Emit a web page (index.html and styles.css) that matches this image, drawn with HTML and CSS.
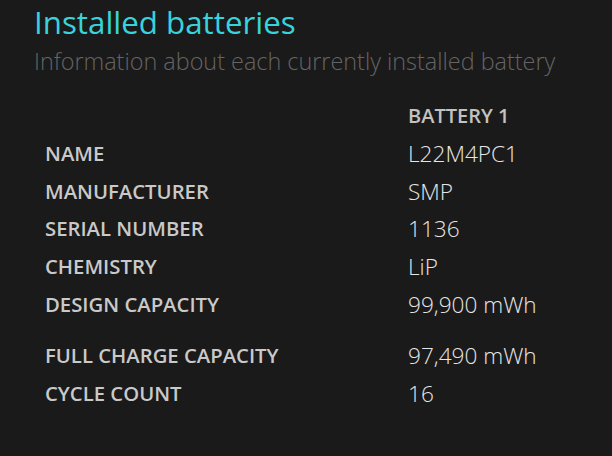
FILE: index.html
```html
<!DOCTYPE html>
<html>
<head>
<meta charset="utf-8">
<link rel="stylesheet" href="styles.css">
</head>
<body>
<div class="page">
  <h1 class="title">Installed batteries</h1>
  <p class="subtitle">Information about each currently installed battery</p>
  <div class="table">
    <div class="row head"><span class="label"></span><span class="col-head">BATTERY 1</span></div>
    <div class="row"><span class="label">NAME</span><span class="value">L22M4PC1</span></div>
    <div class="row"><span class="label">MANUFACTURER</span><span class="value">SMP</span></div>
    <div class="row"><span class="label">SERIAL NUMBER</span><span class="value">1136</span></div>
    <div class="row"><span class="label">CHEMISTRY</span><span class="value">LiP</span></div>
    <div class="row"><span class="label">DESIGN CAPACITY</span><span class="value">99,900 mWh</span></div>
    <div class="row gap"><span class="label">FULL CHARGE CAPACITY</span><span class="value">97,490 mWh</span></div>
    <div class="row"><span class="label">CYCLE COUNT</span><span class="value">16</span></div>
  </div>
</div>
</body>
</html>
```
FILE: styles.css
```css
html, body {
  margin: 0;
  background: #1a1a1a;
  height: 100%;
}
body {
  font-family: "Open Sans", "Noto Sans", sans-serif;
}
.page {
  padding: 7px 0 0 34px;
}
.title {
  margin: 0;
  font-size: 31.3px;
  line-height: 31px;
  font-weight: 400;
  color: #38d3dc;
}
.subtitle {
  margin: 11px 0 0 0;
  font-size: 23.4px;
  line-height: 24px;
  font-weight: 300;
  color: #646464;
}
.table {
  margin: 24px 0 0 11px;
  display: flex;
  flex-direction: column;
}
.row {
  display: grid;
  grid-template-columns: 363px auto;
  height: 37.8px;
  line-height: 37.8px;
}
.row.gap {
  margin-top: 13.5px;
}
.label {
  font-size: 20.3px;
  font-weight: 600;
  color: #c9c9c9;
}
.col-head {
  font-size: 20px;
  font-weight: 600;
  color: #c2c2c2;
}
.value {
  font-size: 22.6px;
  font-weight: 300;
  color: #e6e6e6;
}
```
